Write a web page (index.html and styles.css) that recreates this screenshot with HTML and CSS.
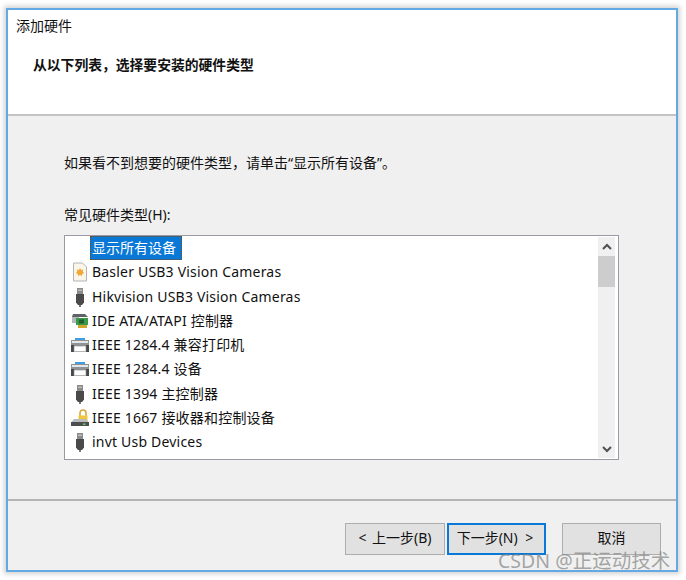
FILE: index.html
```html
<!DOCTYPE html>
<html lang="zh-CN">
<head>
  <meta charset="UTF-8">
  <title>添加硬件</title>
  <link rel="stylesheet" href="styles.css">
</head>
<body>

  <svg class="icon-defs" width="0" height="0">
    <symbol id="icon-usb" viewBox="0 0 16 20">
      <rect x="5" y="1" width="6" height="6" fill="#8a8a8a"/>
      <rect x="6.500" y="2.500" width="1" height="1.500" fill="#eee"/>
      <rect x="8.500" y="2.500" width="1" height="1.500" fill="#eee"/>
      <path d="M4 7h8v8.500l-2 2.500H6l-2-2.500z" fill="#4a4a4a"/>
      <rect x="7" y="18" width="2" height="2" fill="#777"/>
    </symbol>
    <symbol id="icon-printer" viewBox="0 0 20 14">
      <rect x="5" y="0" width="10" height="3" fill="#3f9fdc"/>
      <rect x="1" y="2" width="18" height="6" fill="#8f9498"/>
      <rect x="2" y="3" width="16" height="2" fill="#e4e6e8"/>
      <rect x="1" y="7" width="3" height="7" fill="#45494c"/>
      <rect x="16" y="7" width="3" height="7" fill="#45494c"/>
      <rect x="4" y="8" width="12" height="5.500" fill="#fff" stroke="#888" stroke-width=".6"/>
    </symbol>
  </svg>

  <div class="wizard">
    <div class="wizard-head">
      <div class="wizard-title">添加硬件</div>
      <div class="wizard-heading">从以下列表，选择要安装的硬件类型</div>
    </div>

    <div class="wizard-body">
      <p class="hint">如果看不到想要的硬件类型，请单击“显示所有设备”。</p>
      <div class="list-label">常见硬件类型(H):</div>

      <div class="listbox">
        <ul class="hw-list">
          <li class="hw-row"><span class="hw-icon"></span><span class="hw-selected">显示所有设备</span></li>
          <li class="hw-row">
            <span class="hw-icon">
              <svg width="16" height="20" viewBox="0 0 16 20">
                <path d="M1.500 1h9l4 4v14h-13z" fill="#fbf6ea" stroke="#b4b4b4"/>
                <path d="M8 6l1.200 1.900 2.100-.4-.5 2.200 1.400 1.600-2 .6-.3 2.200-1.900-1.100-1.900 1.100-.3-2.200-2-.6 1.400-1.600-.5-2.200 2.100.4z" fill="#eda93a"/>
              </svg>
            </span>
            Basler USB3 Vision Cameras
          </li>
          <li class="hw-row"><span class="hw-icon"><svg width="16" height="20"><use href="#icon-usb"/></svg></span>Hikvision USB3 Vision Cameras</li>
          <li class="hw-row">
            <span class="hw-icon">
              <svg width="20" height="16" viewBox="0 0 20 16">
                <path d="M3 1h12l3 3H2z" fill="#5f6366"/>
                <path d="M2 4h7v6H2z" fill="#b4b8bb"/>
                <rect x="6" y="5" width="12" height="7" fill="#3a9a4c"/>
                <rect x="9" y="6.500" width="5" height="4" fill="#1f5f30"/>
                <rect x="8" y="12" width="9" height="3" fill="#d4a52c"/>
              </svg>
            </span>
            IDE ATA/ATAPI 控制器
          </li>
          <li class="hw-row"><span class="hw-icon"><svg width="20" height="14"><use href="#icon-printer"/></svg></span>IEEE 1284.4 兼容打印机</li>
          <li class="hw-row"><span class="hw-icon"><svg width="20" height="14"><use href="#icon-printer"/></svg></span>IEEE 1284.4 设备</li>
          <li class="hw-row"><span class="hw-icon"><svg width="16" height="20"><use href="#icon-usb"/></svg></span>IEEE 1394 主控制器</li>
          <li class="hw-row">
            <span class="hw-icon">
              <svg width="20" height="18" viewBox="0 0 20 18">
                <path d="M10 7V4a3 3 0 0 1 6 0v3" fill="none" stroke="#d9a93a" stroke-width="1.600"/>
                <rect x="8.500" y="6.500" width="9" height="6" fill="#f0c63e"/>
                <path d="M4 10h12l3 3.500H1z" fill="#b8bcbf"/>
                <rect x="1" y="13" width="18" height="4" fill="#4a4e51"/>
                <rect x="13" y="14.500" width="2.500" height="1.500" fill="#5fd05f"/>
              </svg>
            </span>
            IEEE 1667 接收器和控制设备
          </li>
          <li class="hw-row"><span class="hw-icon"><svg width="16" height="20"><use href="#icon-usb"/></svg></span>invt Usb Devices</li>
        </ul>

        <div class="scrollbar">
          <svg class="arrow" width="12" height="8" viewBox="0 0 12 8"><path d="M2 6l4-4 4 4" fill="none" stroke="#505050" stroke-width="2"/></svg>
          <div class="scroll-track"><div class="scroll-thumb"></div></div>
          <svg class="arrow" width="12" height="8" viewBox="0 0 12 8"><path d="M2 2l4 4 4-4" fill="none" stroke="#505050" stroke-width="2"/></svg>
        </div>
      </div>
    </div>

    <div class="wizard-foot">
      <button class="btn btn-prev">&lt; 上一步(B)</button>
      <button class="btn btn-next">下一步(N) &gt;</button>
      <button class="btn btn-cancel">取消</button>
    </div>
  </div>

  <div class="watermark">CSDN @正运动技术</div>

</body>
</html>
```

FILE: styles.css
```css
body {
  font-family: "Noto Sans", "Noto Sans CJK SC", sans-serif;
  background-color: #fff;
  color: #111;
  margin: 0;
  padding: 0;
  width: 686px;
  height: 580px;
  overflow: hidden;
  position: relative;
}

.icon-defs {
  position: absolute;
}

.wizard {
  box-sizing: border-box;
  width: 672px;
  height: 564px;
  margin: 8px 0 0 6px;
  border: 2px solid #64a9e4;
  background: #f0f0f0;
  box-shadow: 0 0 5px 2px rgba(0,0,0,0.18);
  display: flex;
  flex-direction: column;
}

.wizard-head {
  box-sizing: border-box;
  height: 106px;
  background: white;
  border-bottom: 2px solid #c4c4c4;
  padding: 6px 0 0 8px;
}

.wizard-title {
  font-size: 14px;
  line-height: 20px;
}

.wizard-heading {
  font-size: 13.8px;
  font-weight: bold;
  line-height: 20px;
  margin: 19px 0 0 17px;
  color: #111;
}

.wizard-body {
  box-sizing: border-box;
  height: 385px;
  padding: 37px 0 0 56px;
  border-bottom: 2px solid #b4b4b4;
}

.hint {
  font-size: 14px;
  line-height: 20px;
  margin: 0;
}

.list-label {
  font-size: 14px;
  line-height: 20px;
  margin-top: 32px;
}

.listbox {
  box-sizing: border-box;
  width: 555px;
  height: 225px;
  margin-top: 10px;
  background: white;
  border: 1px solid #9a9aa4;
  display: flex;
  justify-content: space-between;
  padding: 1px 3px 1px 0;
}

.hw-list {
  list-style: none;
  margin: -1px 0 0;
  padding: 0;
  flex: 1;
}

.hw-row {
  display: flex;
  align-items: center;
  height: 24.25px;
  font-size: 14px;
  line-height: 20px;
  letter-spacing: 0.2px;
  white-space: nowrap;
}

.hw-icon {
  width: 20px;
  height: 20px;
  margin: 0 2px 0 5px;
  display: flex;
  align-items: center;
  justify-content: center;
  flex-shrink: 0;
}

.hw-selected {
  background-color: #0a78d7;
  color: white;
  outline: 1px dotted #7a4a10;
  outline-offset: -1px;
  padding: 2px 6px 2px 2px;
  margin-left: -2px;
  letter-spacing: 0;
}

.scrollbar {
  width: 17px;
  background: #f0f0f0;
  display: flex;
  flex-direction: column;
  align-items: center;
}

.arrow {
  flex-shrink: 0;
  margin: 6px 0 5px;
}

.scroll-track {
  flex: 1;
  width: 100%;
}

.scroll-thumb {
  height: 31px;
  background: #cdcdcd;
}

.wizard-foot {
  flex: 1;
  display: flex;
  align-items: flex-start;
  padding: 22px 0 0 337px;
}

.btn {
  box-sizing: border-box;
  height: 32px;
  font-family: inherit;
  font-size: 14px;
  line-height: 20px;
  word-spacing: 2px;
  color: #111;
  background: #e1e1e1;
  border: 1px solid #adadad;
  padding: 0 0 3px;
}

.btn-prev {
  width: 100px;
}

.btn-next {
  width: 99px;
  margin-left: 2px;
  border: 2px solid #0a78d7;
  word-spacing: 4px;
  padding-right: 3px;
}

.btn-cancel {
  width: 99px;
  margin-left: 16px;
}

.watermark {
  position: absolute;
  left: 498px;
  top: 549px;
  font-size: 19.5px;
  line-height: 24px;
  color: rgba(130,130,130,0.7);
  white-space: nowrap;
}
```
